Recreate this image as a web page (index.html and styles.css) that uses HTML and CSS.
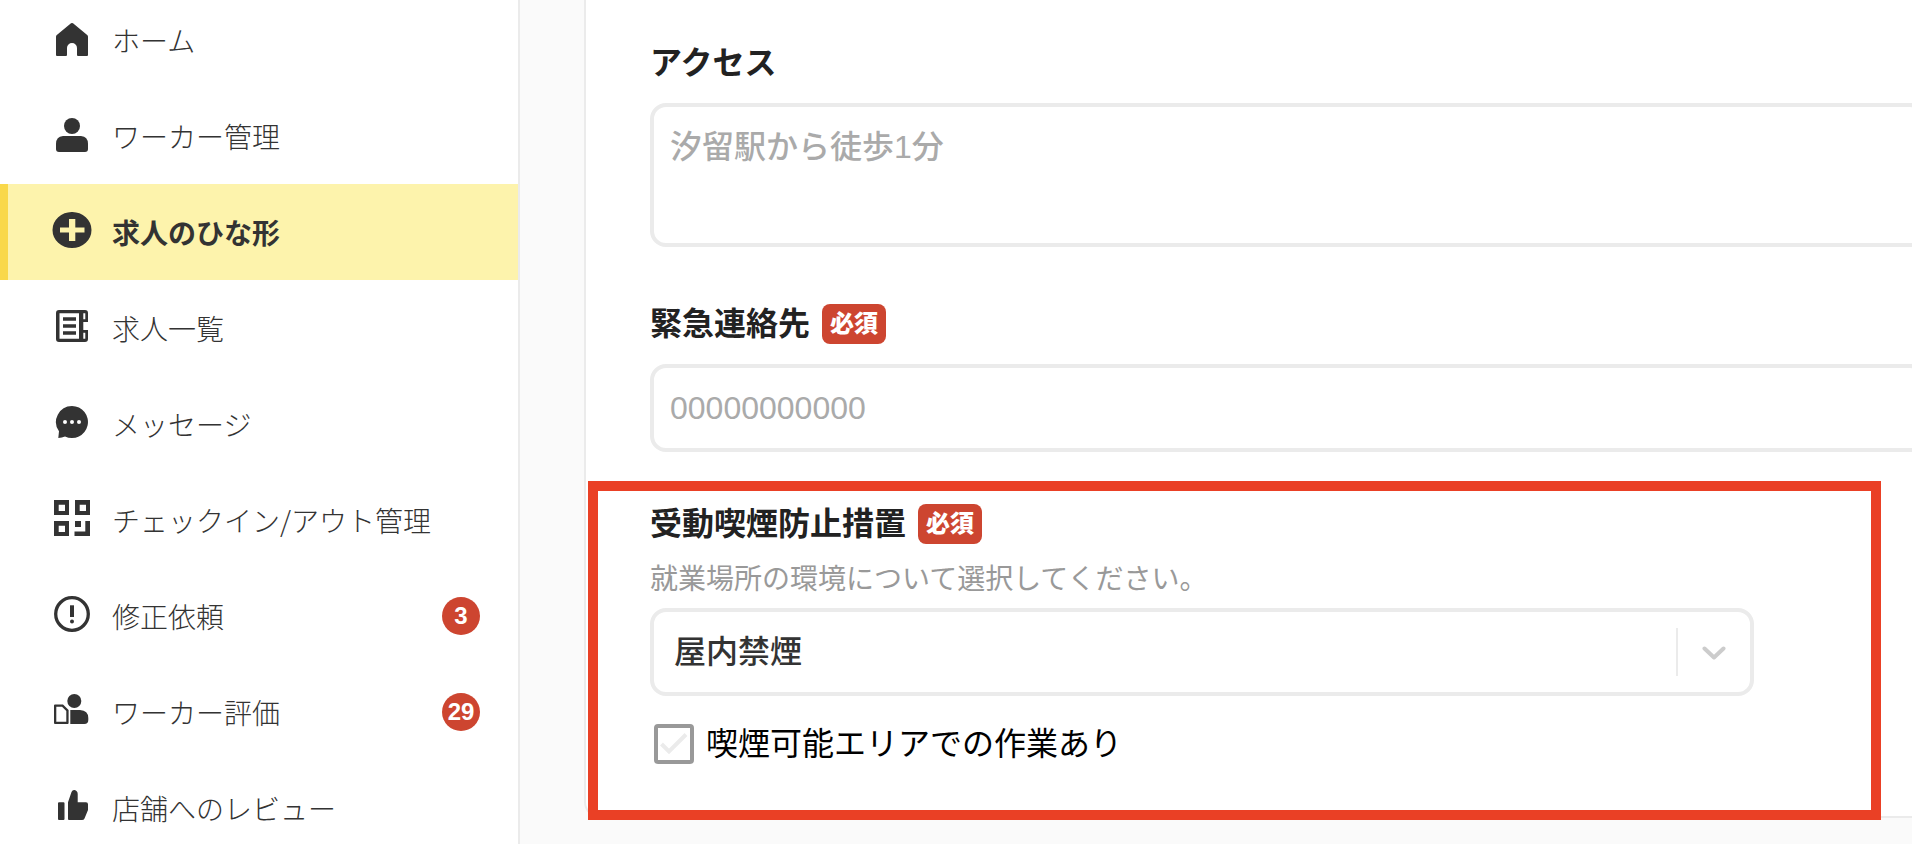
FILE: index.html
```html
<!DOCTYPE html>
<html lang="ja">
<head>
<meta charset="utf-8">
<meta name="viewport" content="width=device-width, initial-scale=1">
<title>求人のひな形</title>
<link rel="stylesheet" href="styles.css">
</head>
<body>
<div class="app">
  <nav class="sidebar" aria-label="メインメニュー">
    <ul class="nav-list">
      <li><a class="nav-item" href="#home">
        <svg class="nav-icon" viewBox="0 0 40 40" aria-hidden="true"><path d="M19 3.300Q20 2.500 21 3.300L35.200 15Q36 15.700 36 16.700V35Q36 36 35 36H26Q25 36 25 35V28A5 5 0 0 0 15 28V35Q15 36 14 36H5Q4 36 4 35V16.700Q4 15.700 4.800 15Z"/></svg>
        <span class="nav-text">ホーム</span>
      </a></li>
      <li><a class="nav-item" href="#workers">
        <svg class="nav-icon" viewBox="0 0 40 40" aria-hidden="true"><circle cx="20" cy="10" r="8"/><path d="M11 20H29Q36 20.500 36 28V33Q36 36 33 36H7Q4 36 4 33V28Q4 20.500 11 20Z"/></svg>
        <span class="nav-text">ワーカー管理</span>
      </a></li>
      <li><a class="nav-item nav-item-active" href="#templates" aria-current="page">
        <svg class="nav-icon" viewBox="0 0 40 40" aria-hidden="true"><path fill-rule="evenodd" d="M.5 18A19.500 18 0 1 1 39.500 18A19.500 18 0 1 1 .5 18ZM17 7V15.500H8V20.500H17V29H23.300V20.500H32.500V15.500H23.300V7Z"/></svg>
        <span class="nav-text">求人のひな形</span>
      </a></li>
      <li><a class="nav-item" href="#jobs">
        <svg class="nav-icon" viewBox="0 0 40 40" aria-hidden="true"><path fill-rule="evenodd" d="M7 2H33Q36 2 36 5V14H31.300V22H36V31Q36 34 33 34H7Q4 34 4 31V5Q4 2 7 2ZM7.500 5.300V30.700H27V5.300ZM31.300 5.300V11.300H33.300V5.300ZM31.300 24.700V30.700H33.300V24.700ZM11 9.300H24V12.700H11ZM11 16.300H24V19.700H11ZM11 23.300H24V26.700H11Z"/></svg>
        <span class="nav-text">求人一覧</span>
      </a></li>
      <li><a class="nav-item" href="#messages">
        <svg class="nav-icon" viewBox="0 0 40 40" aria-hidden="true"><path fill-rule="evenodd" d="M20 2A16 16 0 1 1 13 32.400Q10 33.500 6.300 34L7 27.300A16 16 0 0 1 20 2ZM11 18A2 2 0 1 0 15 18A2 2 0 1 0 11 18ZM18 18A2 2 0 1 0 22 18A2 2 0 1 0 18 18ZM25 18A2 2 0 1 0 29 18A2 2 0 1 0 25 18Z"/></svg>
        <span class="nav-text">メッセージ</span>
      </a></li>
      <li><a class="nav-item" href="#checkin">
        <svg class="nav-icon" viewBox="0 0 40 40" aria-hidden="true"><path fill-rule="evenodd" d="M2 0H17V15H2ZM6.700 4.700V11H13V4.700ZM23 0H38V15H23ZM27.700 4.700V11H34V4.700ZM2 21H17V36H2ZM6.700 25.700V32H13V25.700ZM23 21H29V27H23ZM33.300 21H38V36H22.500V31.500H33.300Z"/></svg>
        <span class="nav-text">チェックイン/アウト管理</span>
      </a></li>
      <li><a class="nav-item" href="#corrections">
        <svg class="nav-icon" viewBox="0 0 40 40" aria-hidden="true"><circle class="icon-line" cx="20" cy="18" r="16.300"/><path d="M18 9.300H22V21H18Z"/><circle cx="20" cy="25.500" r="2"/></svg>
        <span class="nav-text">修正依頼</span>
        <span class="nav-count">3</span>
      </a></li>
      <li><a class="nav-item" href="#ratings">
        <svg class="nav-icon" viewBox="0 0 40 40" aria-hidden="true"><circle cx="22.300" cy="9" r="7"/><path d="M18.300 18H28Q36.300 18.500 36.300 26V28Q36.300 32 32.300 32H18.300ZM3 12.500H11L16.600 18V31Q16.600 32 15.600 32H3Q2 32 2 31V13.500Q2 12.500 3 12.500ZM4.300 14.700V29.800H14.300V19L10 14.700Z" fill-rule="evenodd"/></svg>
        <span class="nav-text">ワーカー評価</span>
        <span class="nav-count">29</span>
      </a></li>
      <li><a class="nav-item" href="#reviews">
        <svg class="nav-icon" viewBox="0 0 40 40" aria-hidden="true"><path d="M7 14.300H11.500Q12.500 14.300 12.500 15.300V31Q12.500 32 11.500 32H7Q6 32 6 31V15.300Q6 14.300 7 14.300ZM16 14.300L19.500 4Q20.500 1.700 22.500 2Q25.700 2.800 25.700 6V14.300H34Q36 14.300 36 16.300V22L32.500 30.500Q31.800 32 30 32H17Q16 32 16 31Z"/></svg>
        <span class="nav-text">店舗へのレビュー</span>
      </a></li>
    </ul>
  </nav>

  <main class="content">
    <form class="card">
      <div class="field">
        <div class="field-head"><label class="field-label" for="access">アクセス</label></div>
        <textarea class="control control-area" id="access" placeholder="汐留駅から徒歩1分"></textarea>
      </div>
      <div class="field">
        <div class="field-head"><label class="field-label" for="phone">緊急連絡先</label><span class="required">必須</span></div>
        <input class="control" id="phone" type="tel" placeholder="00000000000">
      </div>
      <div class="field field-marked">
        <div class="field-head"><label class="field-label" for="smoking">受動喫煙防止措置</label><span class="required">必須</span></div>
        <p class="field-help">就業場所の環境について選択してください。</p>
        <div class="select-box">
          <select class="control control-select" id="smoking">
            <option selected>屋内禁煙</option>
          </select>
          <span class="select-arrow"><svg class="chevron" viewBox="0 0 24 24" aria-hidden="true"><path d="M2.500 8.500L12 17.500L21.500 8.500"/></svg></span>
        </div>
        <label class="check">
          <span class="check-box">
            <input class="check-input" type="checkbox">
            <svg class="check-mark" viewBox="0 0 40 40" aria-hidden="true"><path d="M7.500 20L15 27.500L32 10.500"/></svg>
          </span>
          <span>喫煙可能エリアでの作業あり</span>
        </label>
      </div>
    </form>
  </main>
</div>
</body>
</html>
```
FILE: styles.css
```css
* {
  box-sizing: border-box;
}

body {
  margin: 0;
  color: #333;
  background: #fafafa;
  font-family: "Liberation Sans", "Noto Sans CJK JP", sans-serif;
}

.app {
  display: flex;
  height: 100vh;
  overflow: hidden;
}

/* Sidebar */
.sidebar {
  flex: 0 0 520px;
  background: #fff;
  border-right: 2px solid #ebebeb;
}

.nav-list {
  margin: -8px 0 0;
  padding: 0;
  list-style: none;
}

.nav-item {
  display: flex;
  align-items: center;
  gap: 20px;
  height: 96px;
  padding: 0 38px 0 44px;
  border-left: 8px solid transparent;
  color: #333;
  font-family: "Noto Sans CJK JP", sans-serif;
  font-size: 28px;
  font-weight: 300;
  line-height: 40px;
  text-decoration: none;
}

.nav-item-active {
  background: #fdf3ac;
  border-left-color: #f9d84a;
  font-weight: 700;
}

.nav-icon {
  flex: none;
  width: 40px;
  height: 40px;
  fill: #333;
}

.icon-line {
  fill: none;
  stroke: #333;
  stroke-width: 3.3;
}

.nav-text {
  flex: 1;
  white-space: nowrap;
}

.nav-count {
  width: 38px;
  height: 38px;
  border-radius: 50%;
  background: #cd4530;
  color: #fff;
  font-family: "Liberation Sans", sans-serif;
  font-size: 24px;
  font-weight: 700;
  line-height: 38px;
  text-align: center;
}

/* Form */
.content {
  flex: 1;
  min-width: 0;
  padding-left: 64px;
  overflow: hidden;
}

.card {
  display: flex;
  flex-direction: column;
  gap: 52px;
  margin-right: -80px;
  padding: 43px 64px 52px;
  background: #fff;
  border: 2px solid #ebebeb;
  border-top: 0;
  border-radius: 0 0 16px 16px;
}

.field-head {
  display: flex;
  align-items: center;
  gap: 12px;
  height: 40px;
  margin-bottom: 20px;
}

.field-label {
  color: #222;
  font-size: 32px;
  font-weight: 700;
  line-height: 40px;
}

.required {
  padding: 0 8px;
  border-radius: 8px;
  background: #cd4530;
  color: #fff;
  font-size: 24px;
  font-weight: 900;
  line-height: 40px;
}

.control {
  display: block;
  width: 100%;
  height: 88px;
  padding: 0 16px;
  border: 4px solid #ebebeb;
  border-radius: 16px;
  background: #fff;
  color: #333;
  font: inherit;
  font-size: 32px;
  font-weight: 500;
  line-height: 48px;
}

.control::placeholder {
  color: #aaa;
  opacity: 1;
}

.control-area {
  height: 144px;
  margin-bottom: 5px;
  padding-top: 16px;
  resize: none;
  overflow: hidden;
}

.field-marked {
  position: relative;
  max-width: 1104px;
}

/* Highlight frame drawn over the smoking section */
.field-marked::after {
  content: "";
  position: absolute;
  inset: -23px -127px -56px -62px;
  border: 10px solid #ea4025;
  pointer-events: none;
}

.field-marked .field-head {
  margin-bottom: 16px;
}

.field-help {
  margin: 0 0 8px;
  color: #999;
  font-size: 28px;
  line-height: 40px;
}

.select-box {
  position: relative;
}

.control-select {
  padding: 0 84px 0 20px;
  appearance: none;
}

.select-arrow {
  position: absolute;
  top: 20px;
  right: 4px;
  display: flex;
  align-items: center;
  justify-content: center;
  width: 74px;
  height: 48px;
  border-left: 2px solid #ebebeb;
  pointer-events: none;
}

.chevron {
  width: 24px;
  height: 24px;
  fill: none;
  stroke: #ccc;
  stroke-width: 4;
  stroke-linecap: round;
  stroke-linejoin: round;
}

.check {
  display: flex;
  align-items: center;
  gap: 12px;
  width: max-content;
  height: 40px;
  margin: 28px 0 0 4px;
  color: #000;
  font-size: 32px;
  line-height: 40px;
}

.check-box {
  display: grid;
}

.check-input,
.check-mark {
  grid-area: 1 / 1;
  width: 40px;
  height: 40px;
}

.check-input {
  margin: 0;
  border: 4px solid #999;
  border-radius: 4px;
  background: #fff;
  appearance: none;
}

.check-mark {
  fill: none;
  stroke: #ebebeb;
  stroke-width: 4;
  pointer-events: none;
}

.check-input:checked + .check-mark {
  stroke: #333;
}
```
